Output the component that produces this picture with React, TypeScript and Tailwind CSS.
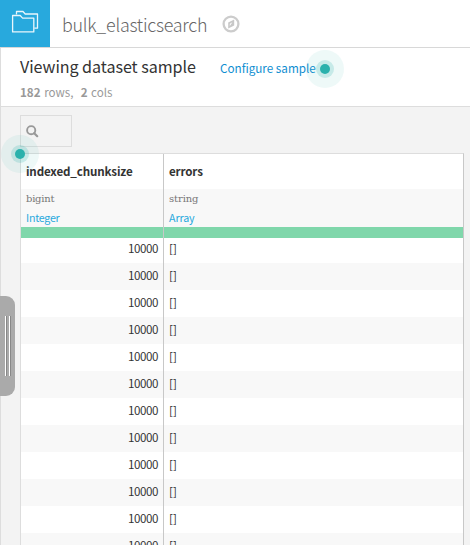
import React from 'react';

const rows = Array.from({ length: 12 }, () => ({ size: '10000', errors: '[]' }));

function Beacon({ className }: { className: string }) {
  return (
    <span className={`absolute flex size-[38px] items-center justify-center rounded-full bg-[#2ab1ac]/8 ${className}`}>
      <span className="flex size-[18px] items-center justify-center rounded-full bg-[#2ab1ac]/20">
        <span className="size-[10px] rounded-full bg-[#2ab1ac]" />
      </span>
    </span>
  );
}

function FoldersIcon() {
  return (
    <svg width="28" height="24" viewBox="0 0 28 24" fill="none" stroke="#e9f6fc" strokeWidth="1.3" strokeLinejoin="round">
      <path d="M5.5 5.5V2.5h6.5l2.2 2.5h12.3v14.2h-3.2" />
      <path d="M1.6 6.5h7.6l2.4 2.6H22.8v13.8H1.6z" />
    </svg>
  );
}

function CompassIcon() {
  return (
    <svg width="18" height="18" viewBox="0 0 18 18">
      <circle cx="9" cy="9" r="7.4" fill="none" stroke="#ccc" strokeWidth="2.3" />
      <path fill="#c8c8c8" fillRule="evenodd" d="M12.2 4.4v6L6.2 13.6V7.6zM10.4 7.3L7.8 8.7v2.2z" />
    </svg>
  );
}

function SearchIcon() {
  return (
    <svg width="13" height="13" viewBox="0 0 13 13" fill="none" stroke="#999">
      <circle cx="5.2" cy="5.2" r="4.1" strokeWidth="1.9" />
      <path d="M8.2 8.2l3 3" strokeWidth="2.2" strokeLinecap="round" />
    </svg>
  );
}

export default function App() {
  return (
    <div className="relative h-[545px] w-[470px] overflow-hidden bg-[#f3f3f3] font-['Noto_Sans_CJK_SC',sans-serif] text-[#333]">
      <header className="flex h-12 border-b border-[#d8d8d8] bg-white">
        <div className="h-[47px] w-[50px] bg-[#28a9dd] pt-[9px] pl-[11px]">
          <FoldersIcon />
        </div>
        <h1 className="ml-3 w-[160px] pt-[11px] text-[17.9px] leading-[26px] font-light tracking-[-0.26px] whitespace-nowrap text-[#666]">
          bulk_elasticsearch
        </h1>
        <div className="pt-[15px]"><CompassIcon /></div>
      </header>
      <div className="h-[497px] border-l border-[#ddd]">
        <section className="h-[59px] border-b border-[#ddd] bg-white pl-[19px]">
          <div className="flex h-[34px] pt-[6px]">
            <h2 className="w-[200px] text-[16.1px] leading-6 tracking-[-0.05px] whitespace-nowrap">Viewing dataset sample</h2>
            <a className="relative text-[11.7px] leading-[27px] whitespace-nowrap text-[#0f8ed1]">
              Configure sample
              <Beacon className="top-[-4px] left-[86px]" />
            </a>
          </div>
          <p className="text-[11.6px] leading-5 whitespace-pre text-[#999] [word-spacing:1px]">
            <b>182</b> rows,  <b>2</b> cols
          </p>
        </section>
        <div className="h-[46px] pt-2 pl-[19px]">
          <div className="relative h-8 w-[52px] border border-[#ddd] pt-[9px] pl-[5px]">
            <SearchIcon />
            <Beacon className="top-[19px] left-[-20px] z-20" />
          </div>
        </div>
        <main className="ml-[19px] h-[392px] w-[444px] overflow-hidden border-x border-t border-l-[#ddd] border-r-[#c8c8c8] border-t-[#ddd] bg-white">
          <div className="grid grid-cols-[143px_299px]">
            <div className="h-[35px] border-r border-[#c8c8c8] pl-[5px] text-[11.6px] leading-[34px] font-bold tracking-[-0.15px]">indexed_chunksize</div>
            <div className="pl-[5px] text-[11.6px] leading-[34px] font-bold tracking-[-0.15px]">errors</div>
            <div className="h-[38px] border-r border-[#c8c8c8] bg-[#f8f8f8] pl-[5px]">
              <div className="h-[19px] font-['DejaVu_Serif',serif] text-[10px] leading-[19px] tracking-[-0.25px] text-[#777]">bigint</div>
              <div className="text-[10.7px] leading-[19px] tracking-[-0.25px] text-[#28a9dd]">Integer</div>
            </div>
            <div className="bg-[#f8f8f8] pl-[5px]">
              <div className="h-[19px] font-['DejaVu_Serif',serif] text-[10px] leading-[19px] tracking-[-0.1px] text-[#777]">string</div>
              <div className="text-[10.7px] leading-[19px] tracking-[-0.1px] text-[#28a9dd]">Array</div>
            </div>
          </div>
          <div className="relative z-10 grid h-[11px] grid-cols-[143px_299px] bg-[#80d7ab]">
            <div className="border-r border-[#c8c8c8]" />
          </div>
          <div className="-mt-[2px]">
            {rows.map((row, i) => (
              <div key={i} className="grid h-[27px] grid-cols-[143px_299px] text-[11.6px] leading-[25px] odd:bg-white even:bg-[#f8f8f8]">
                <div className="border-r border-[#c8c8c8] pr-[5px] text-right tracking-[-0.44px]">{row.size}</div>
                <div className="pl-[5px]">{row.errors}</div>
              </div>
            ))}
          </div>
        </main>
      </div>
      <div className="absolute top-[296px] left-0 flex h-[100px] w-[15px] gap-[3px] rounded-r-[9px] bg-[#aaa] pt-5 pl-[5px]">
        <span className="h-[60px] w-px bg-white shadow-[1px_0_0_#888]" />
        <span className="h-[60px] w-px bg-white shadow-[1px_0_0_#888]" />
      </div>
    </div>
  );
}
